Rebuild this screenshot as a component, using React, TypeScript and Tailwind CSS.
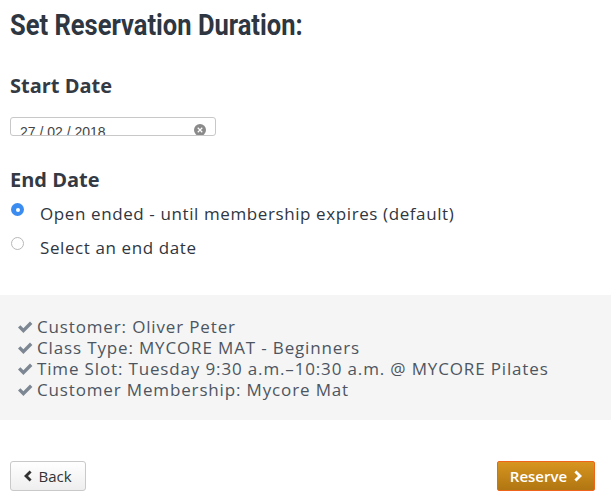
import React from 'react';

const items = [
  'Customer: Oliver Peter',
  'Class Type: MYCORE MAT - Beginners',
  'Time Slot: Tuesday 9:30 a.m.–10:30 a.m. @ MYCORE Pilates',
  'Customer Membership: Mycore Mat',
];

const Check = () => (
  <svg viewBox="0 0 16 16" className="w-[18px] h-[16px] mr-[3px] shrink-0" fill="#7d8793">
    <path d="M1 8.6 L3.4 6.3 L6.4 9.2 L13 2.6 L15.4 5 L6.4 14 Z" />
  </svg>
);

export default function App() {
  return (
    <div className="w-[611px] h-[502px] bg-white overflow-hidden text-[#333a44]" style={{ fontFamily: '"Open Sans", "Noto Sans", sans-serif' }}>
      <div className="px-[10px] pt-[8px]">
        <h1
          className="text-[29px] leading-[34px] font-bold text-[#2e3641] inline-block origin-left scale-x-[0.88] whitespace-nowrap"
          style={{ fontFamily: 'Roboto, "DejaVu Sans Condensed", sans-serif' }}
        >
          Set Reservation Duration:
        </h1>

        <h2 className="mt-[32px] text-[20px] leading-[24px] font-bold text-[#333a44]">Start Date</h2>

        <div className="mt-[19px] w-[206px] h-[19px] border border-[#c8c8c8] rounded-[3px] overflow-hidden relative bg-white">
          <span className="absolute left-[9px] top-[6px] text-[14px] leading-[16px] text-[#444]" style={{ fontFamily: '"Liberation Sans", sans-serif' }}>
            27 / 02 / 2018
          </span>
          <span className="absolute right-[9px] top-[6px] w-[12px] h-[12px] rounded-full bg-[#8a8a8a] flex items-center justify-center">
            <svg viewBox="0 0 8 8" className="w-[6px] h-[6px]" stroke="#fff" strokeWidth="1.6"><path d="M1 1 L7 7 M7 1 L1 7" /></svg>
          </span>
        </div>

        <h2 className="mt-[32px] text-[20px] leading-[24px] font-bold text-[#333a44]">End Date</h2>

        <div className="mt-[11px] flex flex-col gap-[12px]">
          <label className="flex items-center">
            <span className="w-[13px] h-[13px] rounded-full bg-[#3b8cf0] flex items-center justify-center ml-[1px] -mt-[9px]">
              <span className="w-[4px] h-[4px] rounded-full bg-white" />
            </span>
            <span className="ml-[16px] text-[17px] leading-[22px] tracking-[0.6px] text-[#30363f]">Open ended - until membership expires (default)</span>
          </label>
          <label className="flex items-center">
            <span className="w-[13px] h-[13px] rounded-full border border-[#b8b8b8] bg-white ml-[1px] -mt-[9px]" />
            <span className="ml-[16px] text-[17px] leading-[22px] tracking-[0.6px] text-[#30363f]">Select an end date</span>
          </label>
        </div>
      </div>

      <div className="mt-[36px] bg-[#f5f5f5] h-[125px] pt-[21px] pl-[16px]">
        {items.map(t => (
          <div key={t} className="flex items-center h-[21px] text-[17px] tracking-[0.85px] text-[#4d5561] whitespace-nowrap">
            <Check />
            <span>{t}</span>
          </div>
        ))}
      </div>

      <div className="flex justify-between px-[10px] mt-[41px]">
        <button className="w-[76px] h-[30px] border border-[#c9c9c9] rounded-[3px] bg-gradient-to-b from-white to-[#eeeeee] flex items-center justify-center gap-[6px] text-[15px] text-[#333]">
          <svg viewBox="0 0 10 14" className="w-[8px] h-[12px]" fill="#333"><path d="M7 0 L9.5 2.5 L5 7 L9.5 11.5 L7 14 L0 7 Z" /></svg>
          Back
        </button>
        <button className="w-[98px] h-[30px] mr-[6px] border border-[#f0641a] rounded-[2px] bg-gradient-to-b from-[#d8951f] to-[#b07612] flex items-center justify-center gap-[7px] text-[15px] font-semibold text-white">
          Reserve
          <svg viewBox="0 0 10 14" className="w-[8px] h-[12px]" fill="#fff"><path d="M3 0 L0.5 2.5 L5 7 L0.5 11.5 L3 14 L10 7 Z" /></svg>
        </button>
      </div>
    </div>
  );
}
